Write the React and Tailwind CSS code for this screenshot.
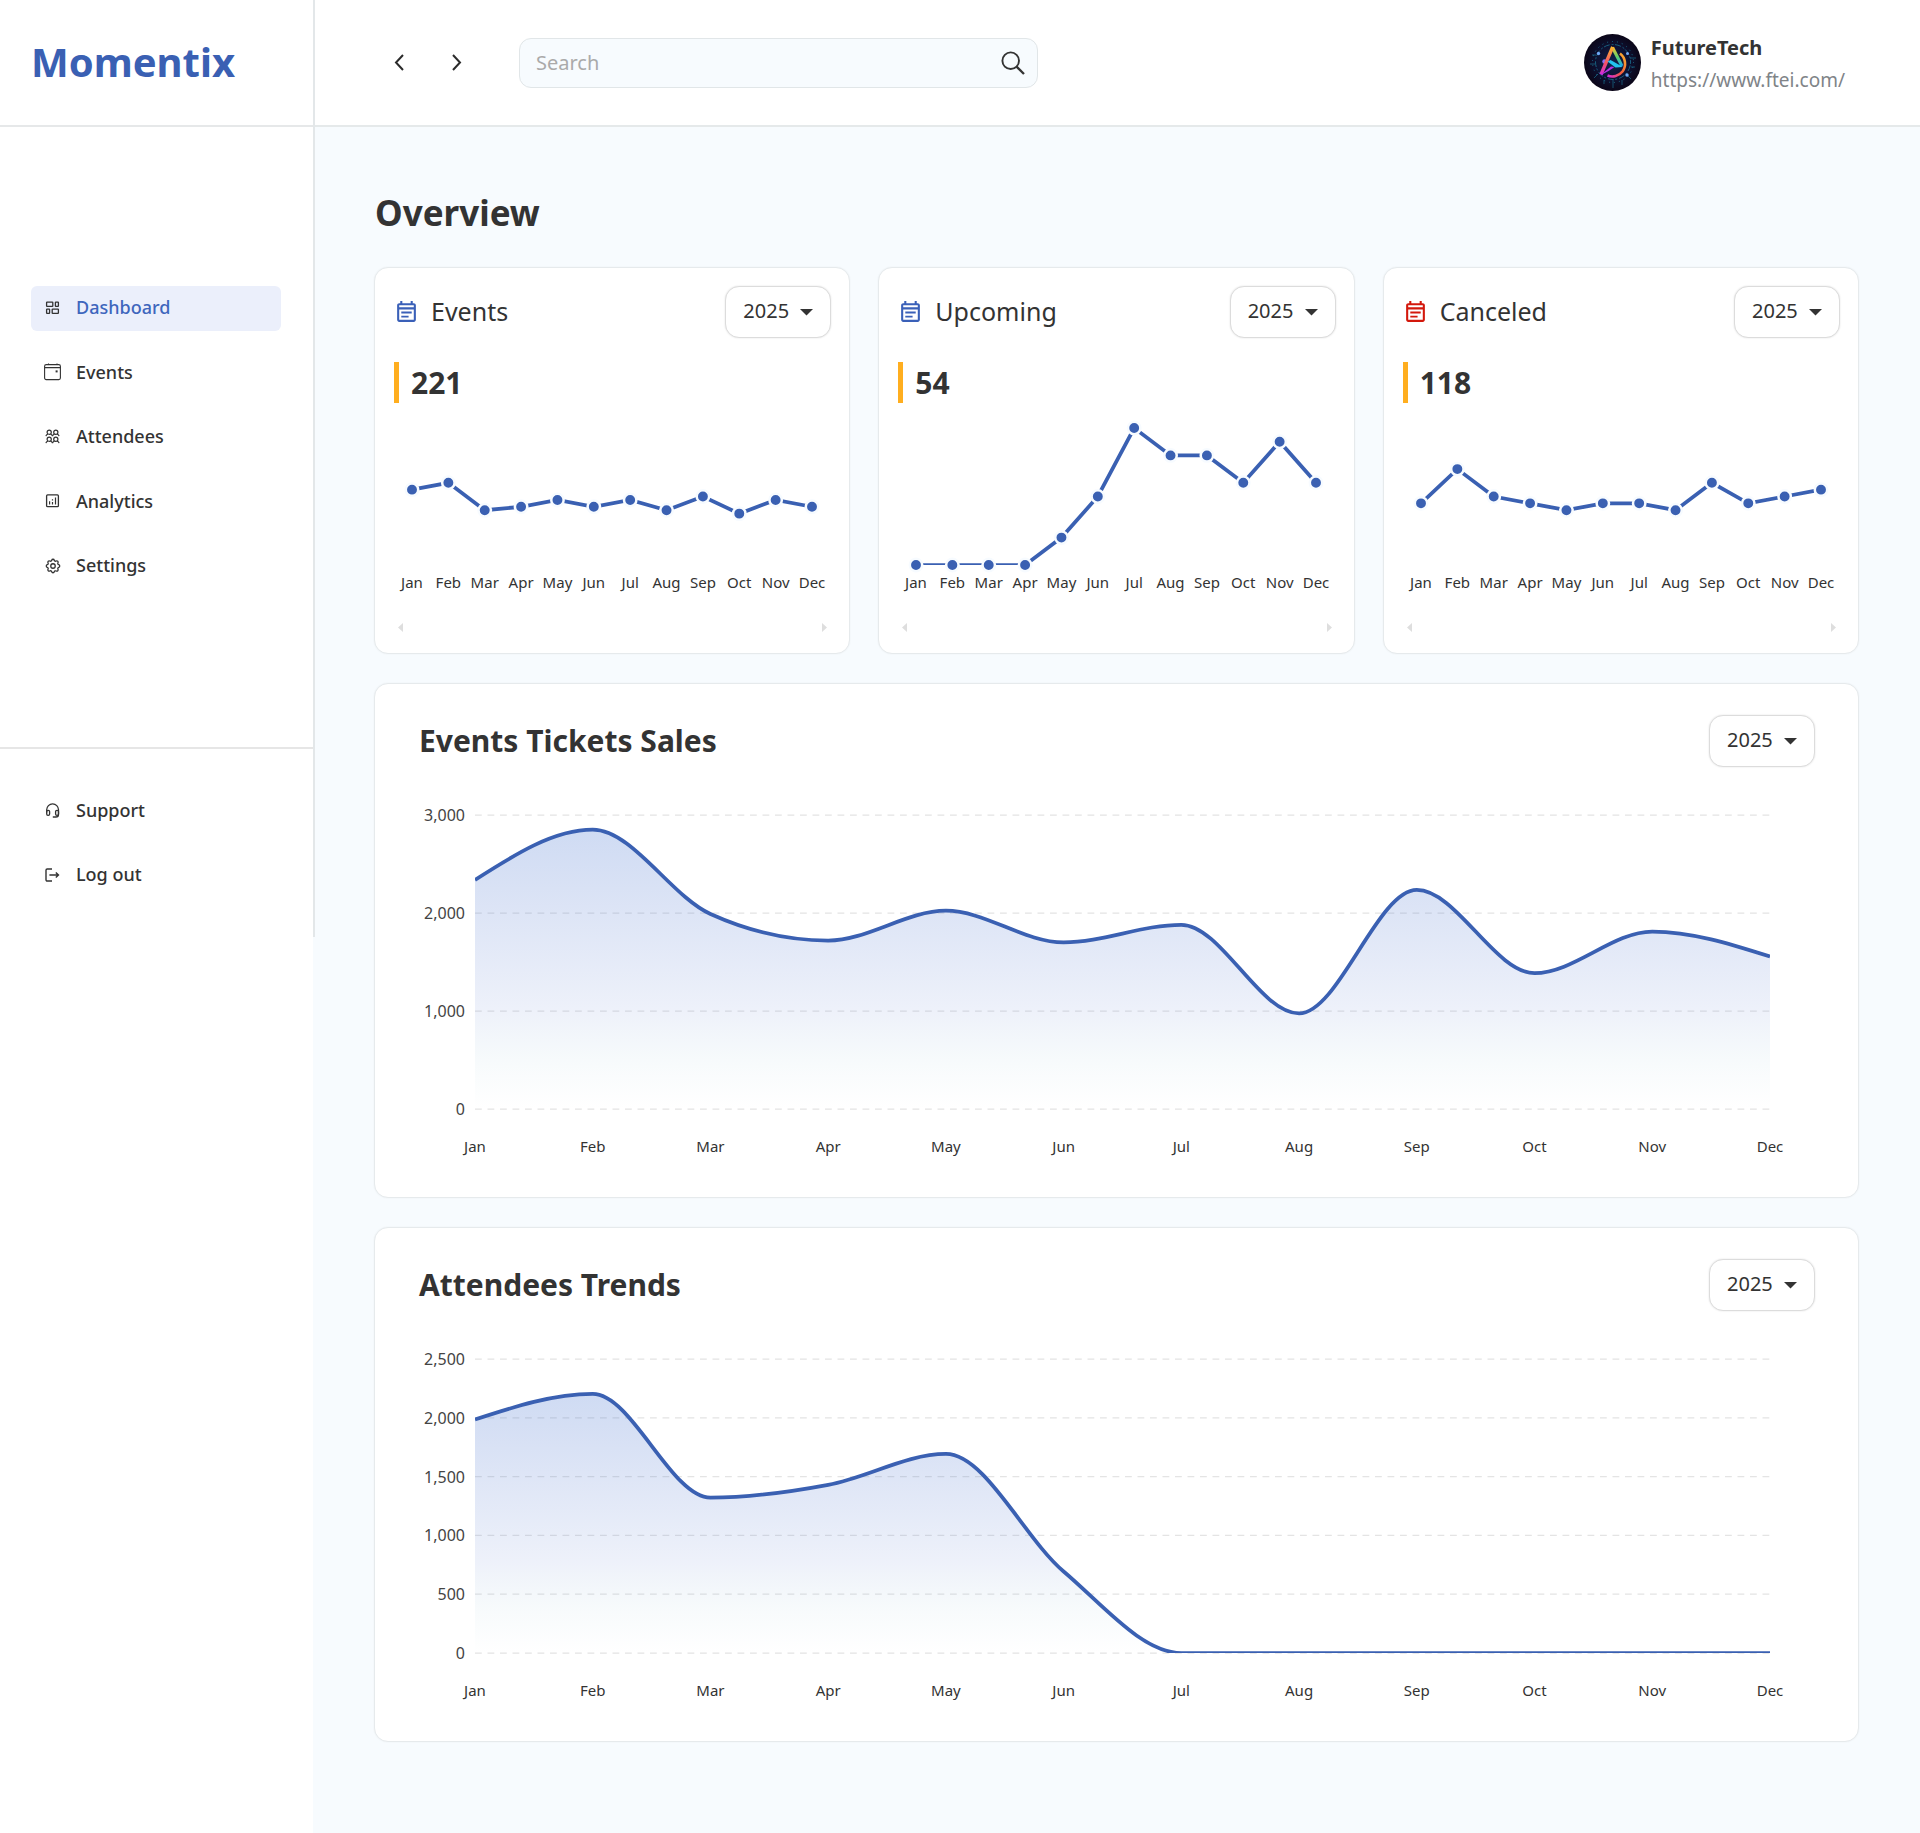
import { useLayoutEffect, useRef, useState } from "react";
import { TbSettings } from "react-icons/tb";

const MONTHS = ["Jan", "Feb", "Mar", "Apr", "May", "Jun", "Jul", "Aug", "Sep", "Oct", "Nov", "Dec"];

function useWidth() {
  const ref = useRef(null);
  const [width, setWidth] = useState(0);
  useLayoutEffect(() => {
    const measure = () => setWidth(Math.round(ref.current.getBoundingClientRect().width));
    measure();
    const observer = new ResizeObserver(measure);
    observer.observe(ref.current);
    return () => observer.disconnect();
  }, []);
  return [ref, width];
}

/* Monotone cubic interpolation through a list of points. */
function smoothPath(points) {
  const n = points.length;
  const slope = (i) => (points[i + 1][1] - points[i][1]) / (points[i + 1][0] - points[i][0]);
  const tangents = points.map((_, i) => {
    if (i === 0 || i === n - 1) return null;
    const a = slope(i - 1);
    const b = slope(i);
    if (a * b <= 0) return 0;
    return Math.sign(a) * 2 * Math.min(Math.abs(a), Math.abs(b), Math.abs((a + b) / 4));
  });
  tangents[0] = (3 * slope(0) - tangents[1]) / 2;
  tangents[n - 1] = (3 * slope(n - 2) - tangents[n - 2]) / 2;
  let d = `M${points[0][0]},${points[0][1]}`;
  for (let i = 0; i < n - 1; i++) {
    const [x0, y0] = points[i];
    const [x1, y1] = points[i + 1];
    const h = (x1 - x0) / 3;
    d += `C${x0 + h},${y0 + h * tangents[i]} ${x1 - h},${y1 - h * tangents[i + 1]} ${x1},${y1}`;
  }
  return d;
}

function DashboardIcon() {
  return (
    <svg className="size-[18px]" viewBox="0 0 18 18" fill="none" stroke="currentColor" strokeWidth="1.3">
      <rect x="2.6" y="3.1" width="6.2" height="4.3" rx=".5" />
      <rect x="11.4" y="3.1" width="3" height="4.3" rx=".5" />
      <rect x="2.6" y="10.1" width="3" height="4.3" rx=".5" />
      <rect x="8.2" y="10.1" width="6.2" height="4.3" rx=".5" />
    </svg>
  );
}

function EventsIcon() {
  return (
    <svg className="size-[18px]" viewBox="0 0 18 18" fill="none" stroke="currentColor" strokeWidth="1.1">
      <rect x=".6" y="1.600" width="15.800" height="15" rx="1.600" />
      <path d="M.6 4.600h15.800M4.500 .4v1.200M13 .4v1.200" />
      <rect x="11.600" y="7.400" width="2" height="2" fill="currentColor" stroke="none" />
    </svg>
  );
}

function Person({ x, y }) {
  return (
    <g>
      <circle cx={x} cy={y} r="2.1" />
      <path d={`M${x - 3.3} ${y + 4}c.2-1.2 1-1.9 2.1-2.2M${x + 3.3} ${y + 4}c-.2-1.2-1-1.9-2.1-2.2`} />
    </g>
  );
}

function AttendeesIcon() {
  return (
    <svg className="size-[18px]" viewBox="0 0 18 18" fill="none" stroke="currentColor" strokeWidth="1.2">
      <Person x={5.2} y={4.2} />
      <Person x={11.8} y={4.2} />
      <Person x={5.2} y={11.2} />
      <Person x={11.8} y={11.2} />
    </svg>
  );
}

function AnalyticsIcon() {
  return (
    <svg className="size-[18px]" viewBox="0 0 18 18" fill="none" stroke="currentColor" strokeWidth="1.3">
      <rect x="2.6" y="2.9" width="11.8" height="11.8" rx="1" />
      <path d="M5.6 9.2v3.2M8.5 7.2v1.2M8.5 10v2.4M11.5 5.6v6.8" strokeWidth="1.2" />
    </svg>
  );
}

function SettingsIcon() {
  return <TbSettings className="size-[18px] stroke-[1.7]" />;
}

function SupportIcon() {
  return (
    <svg className="size-[18px]" viewBox="0 0 18 18" fill="none" stroke="currentColor" strokeWidth="1.3">
      <path d="M2.7 10.5V7.8a5.9 5.9 0 0 1 11.8 0v4.6c0 1.5-1.2 2.6-2.6 2.6H8.8" />
      <rect x="2.7" y="8.3" width="2.9" height="5" rx="1.3" />
      <rect x="11.6" y="8.3" width="2.9" height="5" rx="1.3" />
    </svg>
  );
}

function LogoutIcon() {
  return (
    <svg className="size-[18px]" viewBox="0 0 18 18" fill="none" stroke="currentColor" strokeWidth="1.4">
      <path d="M8 3H3.2a1.2 1.2 0 0 0-1.2 1.2v9.6A1.2 1.2 0 0 0 3.2 15H8M5.4 9h9M11.8 6.4 14.5 9l-2.7 2.6" />
    </svg>
  );
}

function EventNoteIcon({ className }) {
  return (
    <svg className={className} viewBox="0 0 24 24" fill="currentColor" aria-hidden="true">
      <path d="M19 4h-1V2h-2v2H8V2H6v2H5c-1.1 0-2 .9-2 2v14c0 1.1.9 2 2 2h14c1.1 0 2-.9 2-2V6c0-1.1-.9-2-2-2zm0 16H5V10h14v10zm0-12H5V6h14v2zM7 12h10v1.8H7zm0 4h7v1.8H7z" />
    </svg>
  );
}

function Avatar() {
  return (
    <svg className="size-[57px] shrink-0" viewBox="0 0 57 57" role="img" aria-label="FutureTech logo">
      <defs>
        <radialGradient id="av-bg">
          <stop offset="0" stopColor="#10234a" />
          <stop offset=".6" stopColor="#0d1030" />
          <stop offset="1" stopColor="#0b0618" />
        </radialGradient>
        <linearGradient id="av-left" x1="0" y1="1" x2="0" y2="0">
          <stop offset="0" stopColor="#d22be0" />
          <stop offset=".4" stopColor="#f4506a" />
          <stop offset="1" stopColor="#fdb52c" />
        </linearGradient>
        <linearGradient id="av-right" x1="0" y1="0" x2="0" y2="1">
          <stop offset="0" stopColor="#f9c22e" />
          <stop offset=".5" stopColor="#5ed06a" />
          <stop offset="1" stopColor="#17a6f0" />
        </linearGradient>
        <linearGradient id="av-ring" x1="0" y1="1" x2="1" y2="0">
          <stop offset="0" stopColor="#d22be0" />
          <stop offset=".45" stopColor="#f55a3c" />
          <stop offset="1" stopColor="#fdb52c" />
        </linearGradient>
      </defs>
      <circle cx="28.5" cy="28.5" r="28.5" fill="url(#av-bg)" />
      <g fill="none" stroke="#1c7f9c">
        <circle cx="29" cy="28" r="17.5" strokeDasharray="2 1.5 6 2" opacity=".7" />
        <circle cx="29" cy="28" r="20.5" strokeDasharray="1 4" opacity=".8" />
        <path d="M29 46v8M20 46v4M38 46v5M8 21h4M6 30h5M46 24h6M47 33h4M14 40l-4 4M43 41l4 4" opacity=".6" />
      </g>
      <g fill="#6fa8f5">
        <circle cx="14.5" cy="19.5" r="1.7" />
        <circle cx="43.5" cy="19.5" r="1.5" />
        <circle cx="43" cy="41" r="1.7" />
        <circle cx="20.5" cy="27.5" r="2.2" fill="#8c6cf0" />
      </g>
      <path d="M36 19.5a13 13 0 0 1 2.5 18 13 13 0 0 1-15 4" fill="none" stroke="url(#av-ring)" strokeWidth="2.6" />
      <path d="M28.5 13.500 38 32" fill="none" stroke="url(#av-right)" strokeWidth="3.200" />
      <path d="M28.700 13 17 40.500" fill="none" stroke="url(#av-left)" strokeWidth="3.400" />
      <path d="m23.500 27.500 3-1.500L39 33l-7.500.5z" fill="#22c3ee" />
      <path d="m16 41.500 11-9 3.500.5-6 4z" fill="#b832e6" />
    </svg>
  );
}

function YearSelect({ label }) {
  return (
    <div className="relative shrink-0">
      <select
        aria-label={label}
        defaultValue="2025"
        className="block h-[52px] w-[106px] appearance-none rounded-[14px] border border-[#dcdcdc] bg-white pb-0.5 pl-[17px] text-[20px] text-[#333] shadow-[0_0_2px_rgba(0,0,0,0.12)] outline-none"
      >
        <option>2025</option>
        <option>2024</option>
        <option>2023</option>
      </select>
      <svg className="pointer-events-none absolute top-[23px] right-[18px] h-[7px] w-[13px]" viewBox="0 0 13 7" fill="#333" aria-hidden="true">
        <path d="M0 0h13L6.500 6.500z" />
      </svg>
    </div>
  );
}

function MiniChart({ id, values, max }) {
  const [ref, width] = useWidth();
  const top = 14;
  const height = 137;
  const left = 18;
  const step = (width - left - 19) / 11;
  const points = values.map((v, i) => [left + i * step, top + height * (1 - v / max)]);
  return (
    <div ref={ref} className="h-[178px] w-full">
      <svg width={width} height="178" className="block overflow-visible" role="img" aria-label={`${id} per month`}>
        <clipPath id={`clip-${id}`}>
          <rect x="0" y="0" width={width} height={top + height} />
        </clipPath>
        <polyline
          points={points.map((p) => p.join(",")).join(" ")}
          clipPath={`url(#clip-${id})`}
          fill="none"
          stroke="#3a60b2"
          strokeWidth="3.75"
        />
        {points.map(([x, y], i) => (
          <circle key={MONTHS[i]} cx={x} cy={y} r="6.2" fill="#3a60b2" stroke="#f7fbff" strokeWidth="2.5" />
        ))}
        {points.map(([x], i) => (
          <text key={MONTHS[i]} x={x} y="174" textAnchor="middle" fill="#333" className="text-[15px]">
            {MONTHS[i]}
          </text>
        ))}
      </svg>
    </div>
  );
}

function StatCard({ title, total, values, max, iconColor }) {
  return (
    <section className="rounded-[14px] border border-[#e6eaec] bg-white pt-[18px] pr-[18px] pb-[21px] pl-[19px] shadow-[0_0_2px_rgba(0,0,0,0.05)]">
      <div className="flex items-center justify-between">
        <div className="flex items-center gap-3 pb-0.5">
          <EventNoteIcon className={iconColor} />
          <h2 className="text-[25px] leading-[34px] text-[#333]">{title}</h2>
        </div>
        <YearSelect label={`${title} year`} />
      </div>
      <p className="mt-6 flex h-[41px] items-center border-l-[5px] border-[#ffae1f] pl-3 text-[30px] font-bold text-[#333]">
        {total}
      </p>
      <div className="mt-[11px]">
        <MiniChart id={title} values={values} max={max} />
      </div>
      <div className="mt-[31px] flex h-[9px] justify-between px-1">
        <button type="button" aria-label="Scroll left">
          <svg className="h-[9px] w-[5px]" viewBox="0 0 5 9" fill="#dedede"><path d="M5 0v9L0 4.5z" /></svg>
        </button>
        <button type="button" aria-label="Scroll right">
          <svg className="h-[9px] w-[5px]" viewBox="0 0 5 9" fill="#dedede"><path d="M0 0v9l5-4.5z" /></svg>
        </button>
      </div>
    </section>
  );
}

function AreaChart({ id, values, max, stepValue }) {
  const [ref, width] = useWidth();
  const left = 56;
  const right = 45;
  const top = 20;
  const height = 294;
  const base = top + height;
  const plot = Math.max(width - left - right, 11);
  const points = values.map((v, i) => [left + (plot * i) / 11, base - (height * v) / max]);
  const line = smoothPath(points);
  const ticks = [];
  for (let t = 0; t <= max; t += stepValue) ticks.push(t);
  return (
    <div ref={ref} className="h-[361px] w-full">
      <svg width={width} height="361" className="block" role="img" aria-label={id}>
        <defs>
          <linearGradient id={`fill-${id}`} x1="0" y1="0" x2="0" y2="1">
            <stop offset="0" stopColor="#3f6fcf" stopOpacity=".25" />
            <stop offset=".65" stopColor="#3f66c8" stopOpacity=".09" />
            <stop offset=".85" stopColor="#3f90af" stopOpacity=".035" />
            <stop offset="1" stopColor="#3f90af" stopOpacity="0" />
          </linearGradient>
          <clipPath id={`clip-${id}`}>
            <rect x={left} y="0" width={plot} height={base} />
          </clipPath>
        </defs>
        {ticks.map((t) => {
          const y = base - (height * t) / max;
          return (
            <g key={t}>
              <line x1={left} x2={left + plot} y1={y} y2={y} stroke="#e4e4e4" strokeWidth="1.25" strokeDasharray="6.8 5.7" />
              <text x={left - 10} y={y + 6} textAnchor="end" fill="#444" className="text-[16px]">
                {t.toLocaleString("en-US")}
              </text>
            </g>
          );
        })}
        <path d={`${line}V${base}H${left}Z`} fill={`url(#fill-${id})`} />
        <path d={line} clipPath={`url(#clip-${id})`} fill="none" stroke="#3a60b2" strokeWidth="3.75" />
        {points.map(([x], i) => (
          <text key={MONTHS[i]} x={x} y={base + 43} textAnchor="middle" fill="#333" className="text-[15px]">
            {MONTHS[i]}
          </text>
        ))}
      </svg>
    </div>
  );
}

function ChartCard({ title, id, ...chart }) {
  return (
    <section className="rounded-[14px] border border-[#e6eaec] bg-white pt-[31px] pr-[43px] pb-[41px] pl-11 shadow-[0_0_2px_rgba(0,0,0,0.05)]">
      <div className="flex items-center justify-between">
        <h2 className="text-[30px] leading-[42px] font-bold text-[#333]">{title}</h2>
        <YearSelect label={`${title} year`} />
      </div>
      <div className="mt-7">
        <AreaChart id={id} {...chart} />
      </div>
    </section>
  );
}

function NavItem({ icon: Icon, label, active }) {
  return (
    <a
      href="#"
      className={`flex h-[45px] items-center gap-[14px] rounded-md pb-0.5 pl-[13px] text-[18px] font-medium text-[#333] ${active ? "bg-[#ebeffb]" : ""}`}
    >
      <Icon />
      <span className={active ? "text-[#3e66bd]" : ""}>{label}</span>
    </a>
  );
}

function Sidebar() {
  return (
    <aside className="flex w-[315px] shrink-0 flex-col">
      <div className="h-[937px] border-r-2 border-[#e3e7e9] bg-white">
        <div className="flex h-[127px] items-center border-b-2 border-[#e6e8e9] pb-0.5 pl-[31px]">
          <a href="#" className="text-[40px] font-bold text-[#3a60b3]">Momentix</a>
        </div>
        <nav className="flex h-[622px] flex-col border-b-2 border-[#e6e6e6] pt-[159px] pr-8 pl-[31px]">
          <div className="flex h-[303px] flex-col justify-between">
            <NavItem icon={DashboardIcon} label="Dashboard" active />
            <NavItem icon={EventsIcon} label="Events" />
            <NavItem icon={AttendeesIcon} label="Attendees" />
            <NavItem icon={AnalyticsIcon} label="Analytics" />
            <NavItem icon={SettingsIcon} label="Settings" />
          </div>
        </nav>
        <div className="flex flex-col gap-[19px] pt-10 pr-8 pl-[31px]">
          <NavItem icon={SupportIcon} label="Support" />
          <NavItem icon={LogoutIcon} label="Log out" />
        </div>
      </div>
      <div className="mr-0.5 flex-1 bg-white" />
    </aside>
  );
}

function Header() {
  return (
    <header className="flex h-[127px] items-center border-b-2 border-[#e5e9ea] bg-white pr-[75px] pl-[72px]">
      <div className="flex shrink-0 gap-[34px]">
        <button type="button" aria-label="Back">
          <svg className="size-6" viewBox="0 0 24 24" fill="none" stroke="#2b2b2b" strokeWidth="2"><path d="M16 4 9 11.5l7 7.5" /></svg>
        </button>
        <button type="button" aria-label="Forward">
          <svg className="size-6" viewBox="0 0 24 24" fill="none" stroke="#2b2b2b" strokeWidth="2"><path d="m8 4 7 7.5L8 19" /></svg>
        </button>
      </div>
      <label className="ml-[50px] flex h-[50px] w-[519px] items-center rounded-xl border border-[#e1e6e8] bg-[#f7fbfe] pr-3 pl-4">
        <input type="text" placeholder="Search" aria-label="Search" className="min-w-0 flex-1 bg-transparent text-[20px] text-[#333] outline-none placeholder:text-[#aaa]" />
        <svg className="size-6 shrink-0" viewBox="0 0 24 24" fill="none" stroke="#333" strokeWidth="1.9" aria-hidden="true">
          <circle cx="9.7" cy="9.7" r="8.3" />
          <path d="m15.6 15.6 7.4 7.4" strokeWidth="2.3" />
        </svg>
      </label>
      <div className="ml-auto flex shrink-0 items-center gap-[10px]">
        <Avatar />
        <div className="pt-0.5">
          <p className="text-[20px] leading-8 font-bold text-[#333]">FutureTech</p>
          <a href="#" className="block text-[19px] leading-8 text-[#808488]">https://www.ftei.com/</a>
        </div>
      </div>
    </header>
  );
}

const EVENTS = [22, 24, 16, 17, 19, 17, 19, 16, 20, 15, 19, 17];
const UPCOMING = [0, 0, 0, 0, 2, 5, 10, 8, 8, 6, 9, 6];
const CANCELED = [9, 14, 10, 9, 8, 9, 9, 8, 12, 9, 10, 11];
const SALES = [2338, 2850, 1990, 1719, 2023, 1700, 1880, 975, 2235, 1386, 1811, 1556];
const TRENDS = [1985, 2203, 1321, 1430, 1693, 693, 0, 0, 0, 0, 0, 0];

export default function App() {
  return (
    <div className="flex min-h-screen bg-[#f7fbfe] font-['Noto_Sans',sans-serif] text-[#333]">
      <Sidebar />
      <div className="min-w-0 flex-1">
        <Header />
        <main className="pt-[63px] pr-[61px] pb-[89px] pl-[59px]">
          <h1 className="pl-px text-[35px] leading-[46px] font-bold text-[#333]">Overview</h1>
          <div className="mt-[31px] grid grid-cols-3 gap-7">
            <StatCard title="Events" total="221" values={EVENTS} max={40} iconColor="size-[25px] text-[#3a60b8]" />
            <StatCard title="Upcoming" total="54" values={UPCOMING} max={10} iconColor="size-[25px] text-[#3a60b8]" />
            <StatCard title="Canceled" total="118" values={CANCELED} max={20} iconColor="size-[25px] text-[#d3180c]" />
          </div>
          <div className="mt-[29px] flex flex-col gap-[29px]">
            <ChartCard title="Events Tickets Sales" id="sales" values={SALES} max={3000} stepValue={1000} />
            <ChartCard title="Attendees Trends" id="trends" values={TRENDS} max={2500} stepValue={500} />
          </div>
        </main>
      </div>
    </div>
  );
}
